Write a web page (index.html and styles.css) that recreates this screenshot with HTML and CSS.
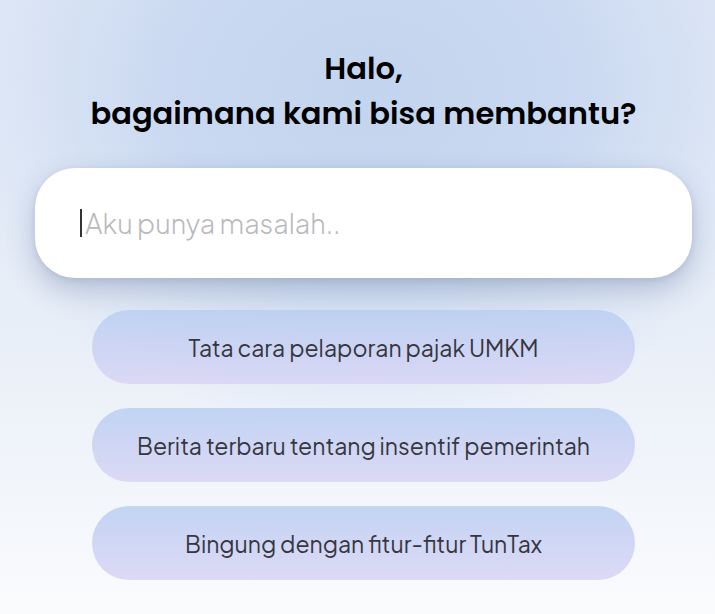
FILE: index.html
```html
<!DOCTYPE html>
<html lang="id">
<head>
<meta charset="utf-8">
<title>Bantuan</title>
<link rel="stylesheet" href="styles.css">
</head>
<body>
<main class="page">
  <h1 class="title">Halo,<br>bagaimana kami bisa membantu?</h1>
  <div class="ask">
    <span class="caret"></span>
    <span class="placeholder">Aku punya masalah..</span>
  </div>
  <div class="chips">
    <button class="chip">Tata cara pelaporan pajak UMKM</button>
    <button class="chip">Berita terbaru tentang insentif pemerintah</button>
    <button class="chip">Bingung dengan fitur-fitur TunTax</button>
  </div>
</main>
</body>
</html>
```

FILE: styles.css
```css
html, body {
  margin: 0;
  height: 100%;
}
body {
  background:
    radial-gradient(ellipse 62% 55% at 52% 15%, #c3d4ee 0%, #cad9f1 45%, rgba(226,234,247,0) 100%),
    linear-gradient(180deg, #e3eaf7 0%, #e9eff8 55%, #fafbfd 100%);
  font-family: "Plus Jakarta Sans", Inter, sans-serif;
  overflow: hidden;
}
.page {
  box-sizing: border-box;
  width: 715px;
  height: 614px;
  padding: 46px 0 0 12px;
  display: flex;
  flex-direction: column;
  align-items: center;
}
.title {
  margin: 0;
  font-family: Poppins, Inter, sans-serif;
  font-weight: 600;
  font-size: 30.6px;
  line-height: 45px;
  text-align: center;
  color: #000;
}
.ask {
  margin-top: 32px;
  box-sizing: border-box;
  width: 657px;
  height: 110px;
  background: #fff;
  border-radius: 40px;
  box-shadow: 0 12px 28px rgba(70, 90, 130, 0.28), 0 2px 6px rgba(70, 90, 130, 0.12);
  display: flex;
  align-items: center;
  padding-left: 45px;
  gap: 3px;
}
.caret {
  width: 2px;
  height: 28px;
  background: #333;
}
.placeholder {
  font-size: 27px;
  font-weight: 300;
  color: #b9b9bd;
}
.chips {
  margin-top: 32px;
  display: flex;
  flex-direction: column;
  gap: 24px;
}
.chip {
  width: 543px;
  height: 74px;
  border: 0;
  border-radius: 37px;
  background: linear-gradient(180deg, rgba(186, 206, 242, 0.85) 0%, rgba(216, 212, 244, 0.85) 100%);
  font-family: "Plus Jakarta Sans", Inter, sans-serif;
  font-size: 23px;
  font-weight: 400;
  color: #36363f;
  padding: 0;
}
```
